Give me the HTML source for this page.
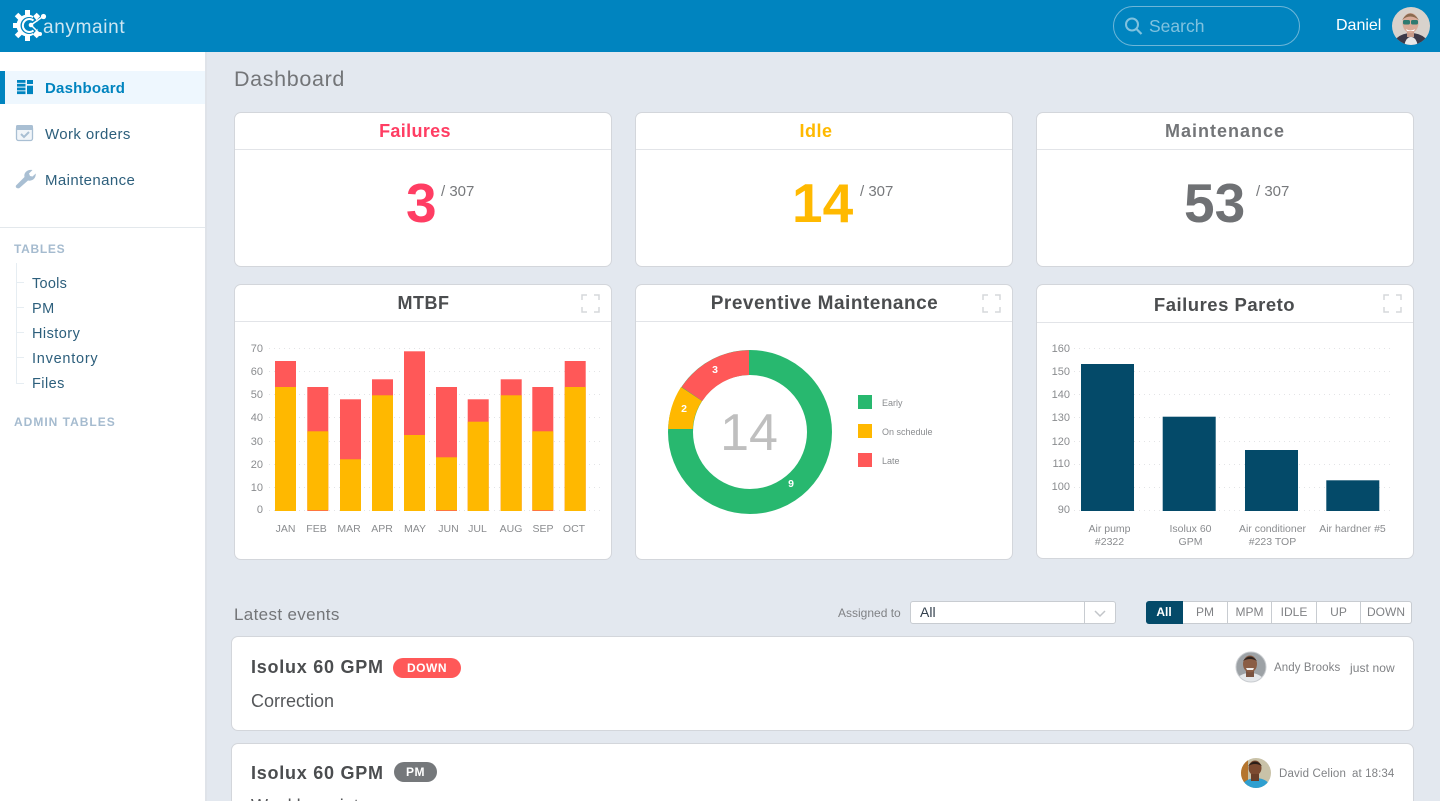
<!DOCTYPE html>
<html><head><meta charset="utf-8"><title>Dashboard</title>
<style>
html,body{margin:0;padding:0;width:1440px;height:801px;overflow:hidden;background:#e3e8ef;font-family:"Liberation Sans",sans-serif}
#p{position:relative;width:1440px;height:801px;overflow:hidden;background:#e3e8ef}
.a,.t{position:absolute}
.t{white-space:nowrap;line-height:1}
.card{position:absolute;background:#fff;border:1px solid #d3d6db;border-radius:7px;box-sizing:border-box}
.line{position:absolute;height:1px;background:#e2e4e8}
.c{transform:translateX(-50%)}
.nav{color:#2d5f7c;font-size:15px;letter-spacing:.4px}
.sub{color:#2d5f7c;font-size:14.5px;letter-spacing:.45px}
.sec{color:#a5bbcf;font-size:12px;font-weight:bold;letter-spacing:.7px}
.h{font-size:18px;font-weight:bold;letter-spacing:.35px;color:#4b4d4f}
.big{font-size:55px;font-weight:bold}
.of{font-size:15px;color:#77797c}
.btn{position:absolute;top:601px;height:23px;box-sizing:border-box;background:#fff;border:1px solid #c8ccd1;border-left:0;font-size:12px;color:#808285;text-align:center;line-height:21px}
svg{position:absolute;left:0;top:0;overflow:visible}
svg text{font-family:"Liberation Sans",sans-serif}
</style></head><body><div id="p">

<!-- Header -->
<div class="a" style="left:0;top:0;width:1440px;height:52px;background:#0084bf"></div>
<div class="a" style="left:0;top:52px;width:205px;height:749px;background:#fff"></div>
<div class="a" style="left:205px;top:52px;width:2px;height:749px;background:#dfe3e9"></div>

<!-- Logo -->
<svg width="70" height="52">
<g fill="#fff">
<circle cx="27.500" cy="25.500" r="11"/>
<rect x="25" y="10" width="5" height="5"/><rect x="25" y="36" width="5" height="5"/><rect x="13" y="23" width="5" height="5"/>
<rect x="25" y="10" width="5" height="5" transform="rotate(45 27.500 25.500)"/><rect x="25" y="10" width="5" height="5" transform="rotate(-45 27.500 25.500)"/><rect x="25" y="10" width="5" height="5" transform="rotate(-135 27.500 25.500)"/><rect x="25" y="10" width="5" height="5" transform="rotate(135 27.500 25.500)"/>
</g>
<circle cx="29" cy="25.500" r="8.500" fill="#0084bf"/>
<path d="M33 16 L41 25.500 L33 34 Z" fill="#0084bf"/>
<path d="M33.500 20.500 A6.500 6.500 0 1 0 33.500 30.500" fill="none" stroke="#fff" stroke-width="2"/>
<path d="M31 25 L43 16.500 M31 25 L39.500 33.500" stroke="#fff" stroke-width="1.500" fill="none"/>
<circle cx="31" cy="25" r="2.300" fill="#fff"/>
<circle cx="43.500" cy="16.500" r="2.600" fill="#fff"/>
<circle cx="40" cy="34" r="2" fill="#fff"/>
</svg>
<div class="t" style="left:43px;top:18px;font-size:19px;color:#cde6f2;letter-spacing:.65px">anymaint</div>

<!-- Search -->
<div class="a" style="left:1113px;top:6px;width:187px;height:40px;box-sizing:border-box;border:1px solid #6db6d8;border-radius:20px"></div>
<svg width="1440" height="52" style="pointer-events:none">
<circle cx="1132" cy="24.500" r="6" fill="none" stroke="#80c2df" stroke-width="2"/>
<path d="M1136.500 29 L1141.500 34" stroke="#80c2df" stroke-width="2.200"/>
<defs><clipPath id="av1"><circle cx="1411" cy="26" r="19"/></clipPath><clipPath id="av2"><circle cx="1251" cy="667" r="15"/></clipPath><clipPath id="av3"><circle cx="1256" cy="773" r="15"/></clipPath></defs>
<g clip-path="url(#av1)">
<rect x="1392" y="7" width="38" height="38" fill="#d8d2cc"/>
<ellipse cx="1411" cy="50" rx="20" ry="17" fill="#3d3a48"/>
<ellipse cx="1411" cy="46" rx="6.500" ry="9" fill="#e8e8e8"/>
<rect x="1407" y="28" width="7" height="9" fill="#c79a88"/>
<ellipse cx="1410.500" cy="23" rx="8" ry="10" fill="#d9ab98"/>
<path d="M1402 20 Q1410 7 1419 20 Q1410 13 1402 20Z" fill="#8a6a4f"/>
<rect x="1403" y="20" width="7" height="4.500" rx="1.500" fill="#2f7a70"/>
<rect x="1411" y="20" width="7" height="4.500" rx="1.500" fill="#2f7a70"/>
<path d="M1406 29 Q1410.500 32 1415 29 L1414 31 H1407Z" fill="#fff"/>
</g>
</svg>
<div class="t" style="left:1149px;top:18px;font-size:17.500px;color:#80c2df">Search</div>
<div class="t" style="left:1336px;top:18px;font-size:16px;color:#fff">Daniel</div>

<!-- Sidebar -->
<div class="a" style="left:0;top:71px;width:205px;height:33px;background:#eef7fe"></div>
<div class="a" style="left:0;top:71px;width:5px;height:33px;background:#0084bf"></div>
<svg width="60" height="200">
<g fill="#0084bf">
<rect x="17" y="80" width="8.500" height="2.800"/><rect x="17" y="83.800" width="8.500" height="2.800"/><rect x="17" y="87.600" width="8.500" height="2.800"/><rect x="17" y="91.300" width="8.500" height="2.800"/>
<rect x="27" y="80" width="6" height="4"/><rect x="27" y="85.700" width="6" height="8.400"/>
</g>
<rect x="16.500" y="126.500" width="16" height="14" rx="2" fill="#f1f5f9" stroke="#a9bfd3" stroke-width="1.300"/>
<rect x="16" y="125" width="17" height="5" rx="1.500" fill="#a9bfd3"/>
<path d="M21 134 L24 137 L29 132" fill="none" stroke="#a9bfd3" stroke-width="2"/>
<path d="M17 187 L25.500 178.500 C24.500 174.500 28 170.500 33.500 171.500 L30 175 L31 177.500 L33.500 178 L36.800 175 C37 180 33 183 29 182 L20.500 189.500 C18.500 190.500 16 189 17 187Z" transform="translate(-1,-1.500)" fill="#a9bfd3"/>
</svg>
<div class="t nav" style="left:45px;top:81px;color:#0084bf;font-weight:bold;letter-spacing:.2px">Dashboard</div>
<div class="t nav" style="left:45px;top:127px">Work orders</div>
<div class="t nav" style="left:45px;top:173px">Maintenance</div>
<div class="a" style="left:0;top:227px;width:205px;height:1px;background:#e3e8ec"></div>
<div class="t sec" style="left:14px;top:243px">TABLES</div>
<div class="a" style="left:16px;top:263px;width:1px;height:121px;background:#e6edf2"></div>
<div class="a" style="left:17px;top:282px;width:7px;height:1px;background:#e6edf2"></div>
<div class="a" style="left:17px;top:307px;width:7px;height:1px;background:#e6edf2"></div>
<div class="a" style="left:17px;top:332px;width:7px;height:1px;background:#e6edf2"></div>
<div class="a" style="left:17px;top:357px;width:7px;height:1px;background:#e6edf2"></div>
<div class="a" style="left:17px;top:383px;width:7px;height:1px;background:#e6edf2"></div>
<div class="t sub" style="left:32px;top:277px;letter-spacing:.25px">Tools</div>
<div class="t sub" style="left:32px;top:302px">PM</div>
<div class="t sub" style="left:32px;top:327px">History</div>
<div class="t sub" style="left:32px;top:352px;letter-spacing:.75px">Inventory</div>
<div class="t sub" style="left:32px;top:377px">Files</div>
<div class="t sec" style="left:14px;top:416px;letter-spacing:1px">ADMIN TABLES</div>

<!-- Title -->
<div class="t" style="left:234px;top:69px;font-size:21.500px;color:#737578;letter-spacing:.65px">Dashboard</div>

<!-- KPI cards -->
<div class="card" style="left:234px;top:112px;width:378px;height:155px"></div>
<div class="card" style="left:635px;top:112px;width:378px;height:155px"></div>
<div class="card" style="left:1036px;top:112px;width:378px;height:155px"></div>
<div class="line" style="left:235px;top:149px;width:376px"></div>
<div class="line" style="left:636px;top:149px;width:376px"></div>
<div class="line" style="left:1037px;top:149px;width:376px"></div>
<div class="t h c" style="left:415px;top:122px;color:#ff3d63">Failures</div>
<div class="t h c" style="left:816px;top:122px;color:#ffb900;letter-spacing:.5px">Idle</div>
<div class="t h c" style="left:1225px;top:122px;color:#737578;letter-spacing:1px">Maintenance</div>
<div class="t big" style="left:406px;top:176px;color:#ff3d63">3</div>
<div class="t big" style="left:792px;top:176px;color:#ffb900">14</div>
<div class="t big" style="left:1184px;top:176px;color:#6f7174">53</div>
<div class="t of" style="left:441px;top:184px">/ 307</div>
<div class="t of" style="left:860px;top:184px">/ 307</div>
<div class="t of" style="left:1256px;top:184px">/ 307</div>

<!-- Chart cards -->
<div class="card" style="left:234px;top:284px;width:378px;height:276px"></div>
<div class="card" style="left:635px;top:284px;width:378px;height:276px"></div>
<div class="card" style="left:1036px;top:284px;width:378px;height:275px"></div>
<div class="line" style="left:235px;top:321px;width:376px"></div>
<div class="line" style="left:636px;top:321px;width:376px"></div>
<div class="line" style="left:1037px;top:322px;width:376px"></div>
<div class="t h c" style="left:423.500px;top:294px;letter-spacing:.5px">MTBF</div>
<div class="t h c" style="left:824.500px;top:294px;font-size:19px;letter-spacing:.5px">Preventive Maintenance</div>
<div class="t h c" style="left:1224.500px;top:296px;font-size:18.500px;letter-spacing:.5px">Failures Pareto</div>

<svg width="1440" height="801">
<!-- expand icons -->
<g fill="none" stroke="#d6d8db" stroke-width="1.500">
<path d="M582 300 V295 H587 M594 295 H599 V300 M599 307 V312 H594 M587 312 H582 V307"/>
<path d="M983 300 V295 H988 M995 295 H1000 V300 M1000 307 V312 H995 M988 312 H983 V307"/>
<path d="M1384 300 V295 H1389 M1396 295 H1401 V300 M1401 307 V312 H1396 M1389 312 H1384 V307"/>
</g>
<!-- grids -->
<g stroke="#e3e4e6" stroke-width="1" stroke-dasharray="1 4">
<path d="M269 348.500H604M269 371.500H604M269 394.500H604M269 417.500H604M269 441.500H604M269 464.500H604M269 487.500H604M269 510.500H604"/>
<path d="M1074 348.500H1391M1074 371.500H1391M1074 394.500H1391M1074 417.500H1391M1074 441.500H1391M1074 464.500H1391M1074 487.500H1391M1074 510.500H1391"/>
</g>
<!-- MTBF bars -->
<g fill="#ff5858">
<rect x="275" y="361" width="21" height="150"/><rect x="307.300" y="387" width="21" height="124"/><rect x="340" y="399.300" width="21" height="111.700"/><rect x="372" y="379.300" width="21" height="131.700"/><rect x="404" y="351.300" width="21" height="159.700"/><rect x="436" y="387" width="21" height="124"/><rect x="467.700" y="399.300" width="21" height="111.700"/><rect x="500.700" y="379.300" width="21" height="131.700"/><rect x="532.300" y="387" width="21" height="124"/><rect x="564.700" y="361" width="21" height="150"/>
</g>
<g fill="#ffb800">
<rect x="275" y="387" width="21" height="124"/><rect x="307.300" y="431.300" width="21" height="79"/><rect x="340" y="459.300" width="21" height="51.700"/><rect x="372" y="395.300" width="21" height="115.700"/><rect x="404" y="435" width="21" height="76"/><rect x="436" y="457.300" width="21" height="53"/><rect x="467.700" y="421.700" width="21" height="89.300"/><rect x="500.700" y="395.300" width="21" height="115.700"/><rect x="532.300" y="431.300" width="21" height="79"/><rect x="564.700" y="387" width="21" height="124"/>
</g>
<g fill="#8a8c8f" font-size="11" text-anchor="end">
<text x="263" y="352">70</text><text x="263" y="375">60</text><text x="263" y="398">50</text><text x="263" y="421">40</text><text x="263" y="445">30</text><text x="263" y="468">20</text><text x="263" y="491">10</text><text x="263" y="513">0</text>
</g>
<g fill="#8a8c8f" font-size="10.500" text-anchor="middle">
<text x="285.500" y="532">JAN</text><text x="316.500" y="532">FEB</text><text x="349" y="532">MAR</text><text x="382" y="532">APR</text><text x="415" y="532">MAY</text><text x="448.500" y="532">JUN</text><text x="477.500" y="532">JUL</text><text x="511" y="532">AUG</text><text x="543" y="532">SEP</text><text x="574" y="532">OCT</text>
</g>
<!-- Donut -->
<circle cx="750" cy="432" r="69.500" fill="none" stroke="#28b86f" stroke-width="25"/>
<path d="M668.200 429 A81.800 81.800 0 0 1 681 387 L702 401 A57.300 57.300 0 0 0 692.700 429 Z" fill="#ffb800"/>
<path d="M681.700 387 A81.800 81.800 0 0 1 749 350.200 V375 A57.300 57.300 0 0 0 702.300 401 Z" fill="#ff5858"/>
<text x="749" y="450" text-anchor="middle" font-size="52" fill="#bfbfbf">14</text>
<g fill="#fff" font-size="10.500" font-weight="bold" text-anchor="middle">
<text x="715" y="373">3</text><text x="684" y="412">2</text><text x="791" y="487">9</text>
</g>
<rect x="858" y="395" width="14" height="14" fill="#28b86f"/>
<rect x="858" y="424" width="14" height="14" fill="#ffb800"/>
<rect x="858" y="453" width="14" height="14" fill="#ff5858"/>
<g fill="#8a8c8f" font-size="9">
<text x="882" y="406">Early</text><text x="882" y="435">On schedule</text><text x="882" y="464">Late</text>
</g>
<!-- Pareto -->
<g fill="#044a69">
<rect x="1081" y="364" width="53" height="147"/><rect x="1162.700" y="416.700" width="53" height="94.300"/><rect x="1245" y="450" width="53" height="61"/><rect x="1326.300" y="480.300" width="53" height="30.700"/>
</g>
<g fill="#8a8c8f" font-size="11" text-anchor="end">
<text x="1070" y="352">160</text><text x="1070" y="375">150</text><text x="1070" y="398">140</text><text x="1070" y="421">130</text><text x="1070" y="445">120</text><text x="1070" y="467">110</text><text x="1070" y="490">100</text><text x="1070" y="513">90</text>
</g>
<g fill="#8a8c8f" font-size="10.500" text-anchor="middle">
<text x="1109.500" y="532">Air pump</text><text x="1109.500" y="545">#2322</text>
<text x="1190.500" y="532">Isolux 60</text><text x="1190.500" y="545">GPM</text>
<text x="1272.500" y="532">Air conditioner</text><text x="1272.500" y="545">#223 TOP</text>
<text x="1352.500" y="532">Air hardner #5</text>
</g>
</svg>

<!-- Latest events -->
<div class="t" style="left:234px;top:606px;font-size:17px;color:#737578;letter-spacing:.35px">Latest events</div>
<div class="t" style="left:838px;top:607px;font-size:12px;color:#808285">Assigned to</div>
<div class="a" style="left:910px;top:601px;width:206px;height:23px;box-sizing:border-box;background:#fff;border:1px solid #c8ccd1;border-radius:3px"></div>
<div class="a" style="left:1084px;top:601px;width:1px;height:23px;background:#c8ccd1"></div>
<div class="t" style="left:920px;top:605px;font-size:14px;color:#33404d">All</div>
<svg width="1440" height="801"><path d="M1095 611 L1100 616 L1105 611" fill="none" stroke="#c2c5c9" stroke-width="1.500"/></svg>

<div class="btn" style="left:1146px;width:37px;background:#044a69;border-color:#044a69;color:#fff;font-weight:bold;border-radius:3px 0 0 3px">All</div>
<div class="btn" style="left:1183px;width:45px">PM</div>
<div class="btn" style="left:1228px;width:44px">MPM</div>
<div class="btn" style="left:1272px;width:45px">IDLE</div>
<div class="btn" style="left:1317px;width:44px">UP</div>
<div class="btn" style="left:1361px;width:51px;border-radius:0 3px 3px 0">DOWN</div>

<!-- Event 1 -->
<div class="card" style="left:231px;top:636px;width:1183px;height:95px"></div>
<div class="t h" style="left:251px;top:658px;letter-spacing:.75px">Isolux 60 GPM</div>
<div class="a" style="left:393px;top:658px;width:68px;height:20px;border-radius:10px;background:#ff5858;color:#fff;font-size:12px;font-weight:bold;text-align:center;line-height:20px;letter-spacing:.5px">DOWN</div>
<div class="t" style="left:251px;top:692px;font-size:18px;color:#55575a">Correction</div>
<div class="t" style="left:1274px;top:663px;font-size:11.500px;color:#808285;letter-spacing:.1px">Andy Brooks</div>
<div class="t" style="left:1350px;top:662px;font-size:12px;color:#808285;letter-spacing:.1px">just now</div>

<!-- Event 2 -->
<div class="card" style="left:231px;top:743px;width:1183px;height:91px"></div>
<div class="t h" style="left:251px;top:764px;letter-spacing:.75px">Isolux 60 GPM</div>
<div class="a" style="left:394px;top:762px;width:43px;height:20px;border-radius:10px;background:#75787b;color:#fff;font-size:12px;font-weight:bold;text-align:center;line-height:20px;letter-spacing:.5px">PM</div>
<div class="t" style="left:251px;top:797px;font-size:18px;color:#55575a">Weekly maint</div>
<div class="t" style="left:1279px;top:769px;font-size:11.500px;color:#808285;letter-spacing:.15px">David Celion</div>
<div class="t" style="left:1352px;top:769px;font-size:11.500px;color:#808285;letter-spacing:.1px">at 18:34</div>

<svg width="1440" height="801">
<g clip-path="url(#av2)">
<rect x="1236" y="652" width="30" height="30" fill="#9da2a6"/>
<ellipse cx="1250" cy="682" rx="14" ry="9" fill="#e4e7ea"/>
<rect x="1246" y="669" width="8" height="8" fill="#7a5340"/>
<ellipse cx="1250" cy="664" rx="7" ry="8.500" fill="#8a5d45"/>
<path d="M1243 661 Q1250 652 1257 661 Q1250 657 1243 661Z" fill="#2e2420"/>
<path d="M1246 668 H1254 L1253 670 H1247Z" fill="#eee"/>
</g>
<circle cx="1251" cy="667" r="15" fill="none" stroke="#c9ccd0" stroke-width="1"/>
<g clip-path="url(#av3)">
<rect x="1241" y="758" width="30" height="30" fill="#c9c2a8"/>
<rect x="1241" y="758" width="7" height="30" fill="#b5752e"/>
<ellipse cx="1256" cy="789" rx="15" ry="11" fill="#2f9fd0"/>
<ellipse cx="1255" cy="768" rx="6.500" ry="7.500" fill="#7c4a30"/>
<path d="M1248 766 Q1255 757 1262 766 Q1255 762 1248 766Z" fill="#2a1e18"/>
<rect x="1251" y="774" width="8" height="7" fill="#6a3e28"/>
</g>
</svg>
</div></body></html>
